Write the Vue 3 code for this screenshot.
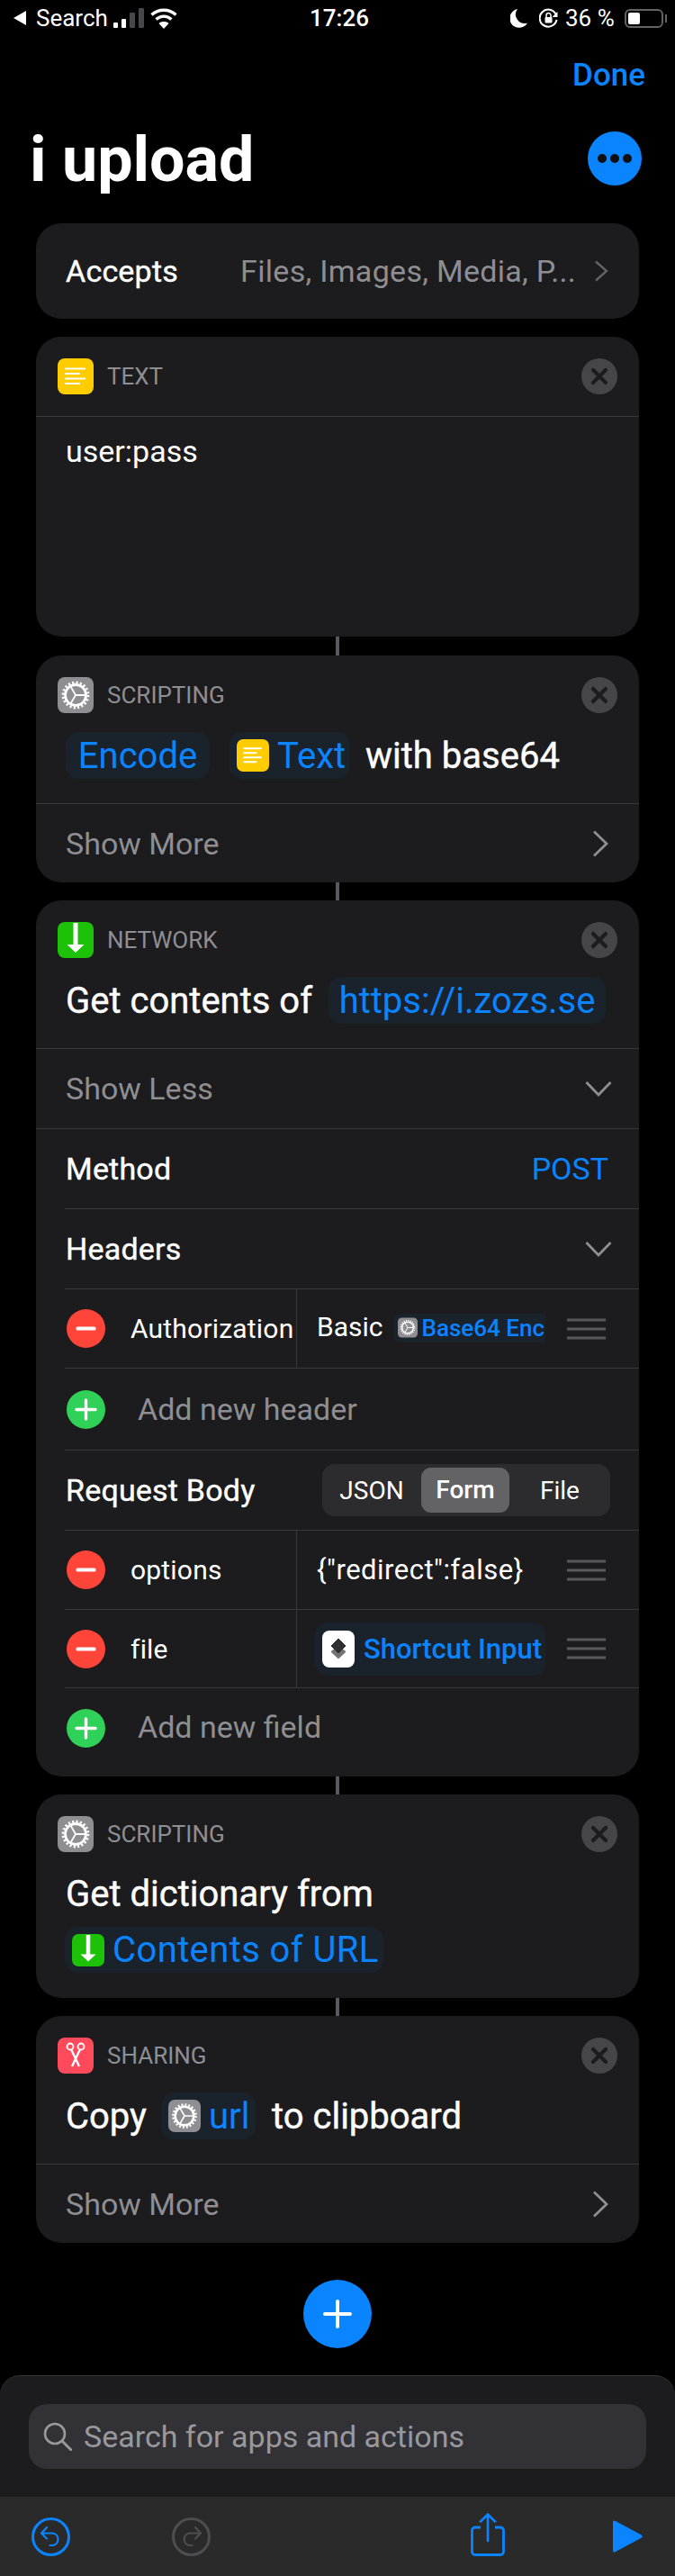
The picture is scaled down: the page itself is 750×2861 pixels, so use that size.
<template>
  <div class="page">
    <!-- shared icons -->
    <svg class="defs" width="0" height="0">
      <defs>
        <symbol id="i-text" viewBox="0 0 40 40">
          <rect width="40" height="40" rx="8" fill="#ffcc00" />
          <path d="M9 11.5h21M9 17h15M9 22.500h21M9 28h15" stroke="#fff" stroke-width="2.200" stroke-linecap="round" />
        </symbol>
        <symbol id="i-gear" viewBox="0 0 40 40">
          <rect width="40" height="40" rx="8" fill="#8e8e93" />
          <circle cx="20" cy="20" r="14" fill="none" stroke="#fff" stroke-width="2.800" stroke-dasharray="2.200 2.200" />
          <circle cx="20" cy="20" r="11.500" fill="none" stroke="#fff" stroke-width="2.800" />
          <path d="M20 20h11M20 20l-5.500-9.500M20 20l-5.500 9.500" stroke="#fff" stroke-width="1.800" />
        </symbol>
        <symbol id="i-down" viewBox="0 0 40 40">
          <rect width="40" height="40" rx="8" fill="#1cc108" />
          <path d="M17.500 1h5v24h7L20 34l-9.500-9h7z" fill="#fff" />
        </symbol>
        <symbol id="i-close" viewBox="0 0 40 40">
          <circle cx="20" cy="20" r="20" fill="#464649" />
          <path d="M13 13l14 14M27 13L13 27" stroke="#1c1c1e" stroke-width="4.200" stroke-linecap="round" />
        </symbol>
        <symbol id="i-minus" viewBox="0 0 43 43">
          <circle cx="21.500" cy="21.500" r="21.500" fill="#ff453a" />
          <rect x="10.500" y="19.500" width="22" height="4" rx="1.500" fill="#fff" />
        </symbol>
        <symbol id="i-plus" viewBox="0 0 43 43">
          <circle cx="21.500" cy="21.500" r="21.500" fill="#30d158" />
          <path d="M11 21.500h21M21.500 11v21" stroke="#fff" stroke-width="3.400" stroke-linecap="round" />
        </symbol>
        <symbol id="i-handle" viewBox="0 0 43 24">
          <path d="M0 2h43M0 12h43M0 22h43" stroke="#5a5a5e" stroke-width="3" />
        </symbol>
      </defs>
    </svg>

    <header class="status">
      <div class="status-left">
        <svg width="15" height="18" viewBox="0 0 15 18"><path d="M15 1v16L1 9z" fill="#fff" /></svg>
        <span>Search</span>
        <svg class="signal" width="34" height="24" viewBox="0 0 34 24">
          <rect x="0" y="17" width="5" height="6" rx="1" fill="#fff" />
          <rect x="9" y="13" width="5" height="10" rx="1" fill="#fff" />
          <rect x="18" y="6" width="6" height="17" rx="1" fill="#48484a" />
          <rect x="28" y="1" width="6" height="22" rx="1" fill="#48484a" />
        </svg>
        <svg class="wifi" width="30" height="24" viewBox="0 0 30 24">
          <path d="M1.500 8.500C9 1.500 21 1.500 28.500 8.500M6.500 13.500c5-4.500 12-4.500 17 0" fill="none" stroke="#fff" stroke-width="3.400" />
          <path d="M15 24l-5.500-6c3-2.600 8-2.600 11 0z" fill="#fff" />
        </svg>
      </div>
      <div class="status-time">17:26</div>
      <div class="status-right">
        <svg width="20" height="22" viewBox="0 0 20 22"><path d="M8 1a10.500 10.500 0 1 0 11 15.500A10 10 0 0 1 8 1z" fill="#fff" /></svg>
        <svg class="lock" width="21" height="22" viewBox="0 0 21 22">
          <path d="M18.500 6.500A9.500 9.500 0 1 0 19.500 13" fill="none" stroke="#fff" stroke-width="2" />
          <path d="M20.500 4v6h-6z" fill="#fff" />
          <rect x="6.500" y="10" width="8" height="6.500" rx="1" fill="#fff" />
          <path d="M8 10V8a2.500 2.500 0 0 1 5 0v2" fill="none" stroke="#fff" stroke-width="1.500" />
        </svg>
        <span class="percent">36 %</span>
        <div class="battery"><i></i></div>
      </div>
    </header>

    <div class="done-row"><span>Done</span></div>

    <div class="title-row">
      <h1>i upload</h1>
      <div class="more"><i></i><i></i><i></i></div>
    </div>

    <section class="card accepts">
      <span class="label">Accepts</span>
      <span class="accepts-value">Files, Images, Media, P...</span>
      <svg class="chev-small" width="16" height="24" viewBox="0 0 16 24"><path d="M2 1.500L14 12 2 22.500" fill="none" stroke="#636366" stroke-width="2.400" /></svg>
    </section>

    <div class="gap"></div>

    <section class="card">
      <div class="head head-line">
        <svg class="app-icon"><use href="#i-text" /></svg>
        <span>TEXT</span>
        <svg class="close"><use href="#i-close" /></svg>
      </div>
      <div class="text-body">user:pass</div>
    </section>

    <div class="link link-long"></div>

    <section class="card">
      <div class="head">
        <svg class="app-icon"><use href="#i-gear" /></svg>
        <span>SCRIPTING</span>
        <svg class="close"><use href="#i-close" /></svg>
      </div>
      <div class="sentence">
        <span class="pill pill-encode">Encode</span>
        <span class="pill pill-text"><svg class="pill-icon"><use href="#i-text" /></svg>Text</span>
        <span>with base64</span>
      </div>
      <div class="row row-full row-last">
        <span class="muted">Show More</span>
        <svg class="chev" width="18" height="30" viewBox="0 0 18 30"><path d="M2 1.500L16 15 2 28.500" fill="none" stroke="#8e8e93" stroke-width="2.800" /></svg>
      </div>
    </section>

    <div class="link"></div>

    <section class="card">
      <div class="head">
        <svg class="app-icon"><use href="#i-down" /></svg>
        <span>NETWORK</span>
        <svg class="close"><use href="#i-close" /></svg>
      </div>
      <div class="sentence sentence-get">
        <span>Get contents of</span>
        <span class="pill pill-url">https://i.zozs.se</span>
      </div>
      <div class="row row-full">
        <span class="muted">Show Less</span>
        <svg class="chev-down" width="30" height="18" viewBox="0 0 30 18"><path d="M1.500 2L15 16 28.500 2" fill="none" stroke="#8e8e93" stroke-width="2.800" /></svg>
      </div>
      <div class="row row-full">
        <span class="label">Method</span>
        <span class="post">POST</span>
      </div>
      <div class="row row-inset">
        <span class="label">Headers</span>
        <svg class="chev-down" width="30" height="18" viewBox="0 0 30 18"><path d="M1.500 2L15 16 28.500 2" fill="none" stroke="#8e8e93" stroke-width="2.800" /></svg>
      </div>
      <div class="kv">
        <div class="kv-key">
          <svg class="round"><use href="#i-minus" /></svg>
          <span class="key-name">Authorization</span>
        </div>
        <div class="kv-value">
          <span class="basic">Basic</span>
          <span class="pill-small"><svg><use href="#i-gear" /></svg>Base64 Enc</span>
          <svg class="handle"><use href="#i-handle" /></svg>
        </div>
      </div>
      <div class="add">
        <svg class="round"><use href="#i-plus" /></svg>
        <span class="muted">Add new header</span>
      </div>
      <div class="request">
        <span class="label">Request Body</span>
        <div class="segment">
          <span class="seg-json">JSON</span>
          <span class="seg-form">Form</span>
          <span class="seg-file">File</span>
        </div>
      </div>
      <div class="kv">
        <div class="kv-key">
          <svg class="round"><use href="#i-minus" /></svg>
          <span class="key-name">options</span>
        </div>
        <div class="kv-value">
          <span class="json-value">{"redirect":false}</span>
          <svg class="handle"><use href="#i-handle" /></svg>
        </div>
      </div>
      <div class="kv kv-short">
        <div class="kv-key">
          <svg class="round"><use href="#i-minus" /></svg>
          <span class="key-name">file</span>
        </div>
        <div class="kv-value kv-value-pill">
          <span class="pill-input">
            <svg viewBox="0 0 36 41">
              <rect width="36" height="41" rx="8" fill="#fff" />
              <path d="M18 31l-8-7.500 3.500-3 4.500 4 4.500-4 3.500 3z" fill="#737373" stroke="#737373" stroke-linejoin="round" />
              <path d="M18 9l8 8-8 8-8-8z" fill="#2f2f31" stroke="#2f2f31" stroke-linejoin="round" />
            </svg>
            Shortcut Input
          </span>
          <svg class="handle"><use href="#i-handle" /></svg>
        </div>
      </div>
      <div class="add add-last">
        <svg class="round"><use href="#i-plus" /></svg>
        <span class="muted">Add new field</span>
      </div>
    </section>

    <div class="link"></div>

    <section class="card">
      <div class="head">
        <svg class="app-icon"><use href="#i-gear" /></svg>
        <span>SCRIPTING</span>
        <svg class="close"><use href="#i-close" /></svg>
      </div>
      <div class="dict">
        <div class="dict-line">Get dictionary from</div>
        <span class="pill pill-contents"><svg class="pill-icon"><use href="#i-down" /></svg>Contents of URL</span>
      </div>
    </section>

    <div class="link"></div>

    <section class="card">
      <div class="head">
        <svg class="app-icon" viewBox="0 0 40 40">
          <rect width="40" height="40" rx="8" fill="#ff4a5c" />
          <circle cx="14" cy="10" r="3.500" fill="none" stroke="#fff" stroke-width="1.800" />
          <circle cx="26" cy="10" r="3.500" fill="none" stroke="#fff" stroke-width="1.800" />
          <path d="M15 13l9 19M25 13l-9 19" stroke="#fff" stroke-width="2.400" />
        </svg>
        <span>SHARING</span>
        <svg class="close"><use href="#i-close" /></svg>
      </div>
      <div class="sentence sentence-copy">
        <span>Copy</span>
        <span class="pill pill-var"><svg class="pill-icon"><use href="#i-gear" /></svg>url</span>
        <span>to clipboard</span>
      </div>
      <div class="row row-full row-last">
        <span class="muted">Show More</span>
        <svg class="chev" width="18" height="30" viewBox="0 0 18 30"><path d="M2 1.500L16 15 2 28.500" fill="none" stroke="#8e8e93" stroke-width="2.800" /></svg>
      </div>
    </section>

    <div class="add-action">
      <svg width="32" height="32" viewBox="0 0 32 32"><path d="M2 16h28M16 2v28" stroke="#fff" stroke-width="4" stroke-linecap="round" /></svg>
    </div>

    <section class="sheet">
      <div class="search">
        <svg width="32" height="32" viewBox="0 0 32 32">
          <circle cx="13" cy="13" r="11" fill="none" stroke="#98989d" stroke-width="2.600" />
          <path d="M21 21l10 10" stroke="#98989d" stroke-width="3" stroke-linecap="round" />
        </svg>
        <span>Search for apps and actions</span>
      </div>
    </section>

    <footer class="toolbar">
      <svg class="tool-undo" width="43" height="43" viewBox="0 0 43 43">
        <circle cx="21.500" cy="21.500" r="20" fill="none" stroke="#0a84ff" stroke-width="3" />
        <path d="M17 11l-6 6.500 6 6M11 17.500h12.500a6.800 6.800 0 0 1 0 13.500h-3" fill="none" stroke="#0a84ff" stroke-width="2.200" stroke-linecap="round" stroke-linejoin="round" />
      </svg>
      <svg class="tool-redo" width="43" height="43" viewBox="0 0 43 43">
        <circle cx="21.500" cy="21.500" r="20" fill="none" stroke="#4e4e50" stroke-width="3" />
        <path d="M26 11l6 6.500-6 6M32 17.500H19.500a6.800 6.800 0 0 0 0 13.500h3" fill="none" stroke="#4e4e50" stroke-width="2.200" stroke-linecap="round" stroke-linejoin="round" />
      </svg>
      <svg class="tool-share" width="38" height="48" viewBox="0 0 38 48">
        <path d="M11 16H5a3.500 3.500 0 0 0-3.500 3.500v23A3.500 3.500 0 0 0 5 46.500h28a3.500 3.500 0 0 0 3.500-3.500V19.500A3.500 3.500 0 0 0 33 16h-6" fill="none" stroke="#0a84ff" stroke-width="2.800" />
        <path d="M19 31V2M11 9.500L19 1.500l8 8" fill="none" stroke="#0a84ff" stroke-width="2.600" stroke-linecap="round" />
      </svg>
      <svg class="tool-play" width="33" height="36" viewBox="0 0 33 36">
        <path d="M2 0.500L32 16.500a1.800 1.800 0 0 1 0 3L2 35.500a1.500 1.500 0 0 1-2-1.500V2a1.500 1.500 0 0 1 2-1.500z" fill="#0a84ff" />
      </svg>
    </footer>
  </div>
</template>

<script setup>
</script>

<style>
body {
  background: #000;
}
</style>

<style scoped>
.page {
  width: 750px;
  height: 2861px;
  background: #000;
  color: #fff;
  font-family: Roboto, "Liberation Sans", sans-serif;
  overflow: hidden;
}

.defs {
  position: absolute;
}

/* status bar */
.status {
  height: 40px;
  display: flex;
  align-items: center;
  padding: 0 13px 0 14px;
  font-size: 26px;
  position: relative;
}

.status-left {
  display: flex;
  align-items: center;
}

.status-left span {
  margin-left: 11px;
  width: 78px;
}

.signal {
  margin-left: 8px;
}

.wifi {
  margin-left: 7px;
}

.status-time {
  position: absolute;
  left: 344px;
  font-weight: 500;
}

.status-right {
  margin-left: auto;
  display: flex;
  align-items: center;
}

.lock {
  margin-left: 12px;
}

.percent {
  margin-left: 8px;
  width: 66px;
}

.battery {
  width: 43px;
  height: 21px;
  border: 2px solid #636366;
  border-radius: 6px;
  padding: 2px;
  box-sizing: border-box;
  position: relative;
}

.battery::after {
  content: "";
  position: absolute;
  right: -6px;
  top: 4px;
  width: 2px;
  height: 9px;
  background: #636366;
}

.battery i {
  display: block;
  width: 13px;
  height: 100%;
  background: #fff;
  border-radius: 2px;
}

/* nav */
.done-row {
  height: 96px;
  padding: 24px 33px 0 0;
  box-sizing: border-box;
  display: flex;
  justify-content: flex-end;
  font-size: 35px;
  font-weight: 500;
  line-height: 40px;
  color: #0a84ff;
}

.title-row {
  height: 112px;
  padding: 0 37px 32px 33px;
  box-sizing: border-box;
  display: flex;
  align-items: center;
  justify-content: space-between;
}

h1 {
  margin: 2px 0 0;
  font-size: 70px;
  font-weight: 700;
  line-height: 80px;
}

.more {
  width: 60px;
  height: 60px;
  border-radius: 50%;
  background: #0a84ff;
  display: flex;
  align-items: center;
  justify-content: center;
  gap: 4px;
  margin-top: -1px;
}

.more i {
  width: 10px;
  height: 10px;
  border-radius: 50%;
  background: #101010;
}

/* cards */
.card {
  width: 670px;
  margin: 0 auto;
  background: #1c1c1e;
  border-radius: 28px;
  overflow: hidden;
}

.gap {
  height: 20px;
}

.link {
  width: 4px;
  height: 20px;
  margin: 0 auto;
  background: #5a5a5e;
}

.link-long {
  height: 21px;
}

.accepts {
  height: 106px;
  display: flex;
  align-items: center;
  padding: 0 34px 0 33px;
  box-sizing: border-box;
}

.label {
  font-size: 34px;
  letter-spacing: 0.2px;
  -webkit-text-stroke: 0.4px #fff;
}

.accepts-value {
  margin-left: auto;
  font-size: 34px;
  letter-spacing: 0.3px;
  color: #8e8e93;
  margin-right: 20px;
}

.head {
  height: 84px;
  padding: 24px 24px 0;
  box-sizing: border-box;
  display: flex;
  align-items: flex-start;
  font-size: 26px;
  line-height: 40px;
  color: #8e8e93;
}

.head-line {
  height: 89px;
  border-bottom: 1px solid #38383a;
}

.app-icon {
  width: 40px;
  height: 40px;
  margin-right: 15px;
  flex: none;
}

.close {
  width: 40px;
  height: 40px;
  margin-left: auto;
}

.text-body {
  height: 244px;
  padding: 18px 33px;
  box-sizing: border-box;
  font-size: 34px;
  line-height: 40px;
}

.sentence {
  height: 80px;
  padding: 1px 0 27px 33px;
  box-sizing: border-box;
  display: flex;
  align-items: center;
  font-size: 40px;
  -webkit-text-stroke: 0.4px #fff;
}

.sentence-get {
  gap: 18px;
}

.sentence-copy {
  gap: 16px;
}

.sentence-copy .pill {
  margin-right: 2px;
}

.pill {
  display: inline-flex;
  align-items: center;
  background: #1a222c;
  color: #0a84ff;
  border-radius: 14px;
  height: 52px;
  box-sizing: border-box;
  font-weight: 400;
  padding: 0 8px;
  white-space: nowrap;
  -webkit-text-stroke: 0;
}

.pill-encode {
  width: 160px;
  justify-content: center;
}

.pill-text {
  width: 134px;
  margin-left: 22px;
  margin-right: 17px;
}

.pill-url {
  width: 308px;
  justify-content: center;
}

.pill-icon {
  width: 36px;
  height: 36px;
  margin-right: 9px;
  flex: none;
}

.pill-var {
  width: 105px;
}

.row {
  height: 89px;
  display: flex;
  align-items: center;
  justify-content: space-between;
  padding-right: 34px;
  box-sizing: border-box;
}

.row-full {
  border-top: 1px solid #38383a;
  padding-left: 33px;
}

.row-last {
  height: 88px;
}

.row-inset {
  margin-left: 32px;
  padding-left: 1px;
  border-top: 1px solid #38383a;
}

.row .chev-down {
  margin-right: -4px;
}

.muted {
  font-size: 34px;
  color: #8e8e93;
}

.post {
  font-size: 34px;
  color: #0a84ff;
}

.kv {
  margin-left: 32px;
  height: 88px;
  display: flex;
  border-top: 1px solid #38383a;
  box-sizing: border-box;
}

.kv-short {
  height: 87px;
}

.kv-key {
  width: 258px;
  flex: none;
  display: flex;
  align-items: center;
  border-right: 1px solid #38383a;
  box-sizing: border-box;
  padding-left: 2px;
}

.round {
  width: 43px;
  height: 43px;
  flex: none;
}

.key-name {
  margin-left: 28px;
  font-size: 30px;
  letter-spacing: 0.2px;
  white-space: nowrap;
}

.kv-value {
  flex: 1;
  display: flex;
  align-items: center;
  padding: 0 37px 0 22px;
  font-size: 30px;
}

.kv-value-pill {
  padding-left: 20px;
}

.handle {
  width: 43px;
  height: 24px;
  margin-left: auto;
  flex: none;
}

.basic {
  margin-right: 12px;
  margin-top: -4px;
}

.pill-small {
  display: inline-flex;
  align-items: center;
  width: 168px;
  height: 32px;
  background: #1a222c;
  border-radius: 6px 0 0 6px;
  overflow: hidden;
  white-space: nowrap;
  color: #0a84ff;
  font-size: 26px;
  font-weight: 500;
  padding-left: 4px;
  box-sizing: border-box;
  margin-top: -2px;
}

.pill-small svg {
  width: 22px;
  height: 25px;
  margin-right: 5px;
  flex: none;
}

.json-value {
  white-space: nowrap;
  font-size: 31px;
  letter-spacing: 0.5px;
}

.pill-input {
  display: inline-flex;
  align-items: center;
  width: 256px;
  height: 59px;
  background: #1a222c;
  border-radius: 14px;
  color: #0a84ff;
  font-size: 31px;
  font-weight: 500;
  padding-left: 8px;
  box-sizing: border-box;
  white-space: nowrap;
}

.pill-input svg {
  width: 36px;
  height: 41px;
  margin-right: 10px;
  flex: none;
}

.add {
  margin-left: 32px;
  height: 91px;
  display: flex;
  align-items: center;
  border-top: 1px solid #38383a;
  padding-left: 2px;
  box-sizing: border-box;
}

.add .muted {
  margin-left: 36px;
}

.add-last {
  height: 99px;
  align-items: flex-start;
  padding-top: 23px;
}

.request {
  margin-left: 32px;
  height: 89px;
  display: flex;
  align-items: center;
  justify-content: space-between;
  padding: 0 32px 0 1px;
  border-top: 1px solid #38383a;
  box-sizing: border-box;
}

.segment {
  width: 320px;
  height: 58px;
  background: #2c2c2e;
  border-radius: 14px;
  display: flex;
  align-items: center;
  font-size: 28px;
}

.segment span {
  display: block;
  text-align: center;
}

.seg-json {
  width: 110px;
}

.seg-form {
  width: 98px;
  height: 50px;
  line-height: 50px;
  background: #636366;
  border-radius: 11px;
  font-weight: 500;
}

.seg-file {
  flex: 1;
}

.dict {
  padding: 0 32px;
  height: 142px;
  font-size: 40px;
}

.dict-line {
  height: 63px;
  line-height: 54px;
  padding-left: 1px;
  -webkit-text-stroke: 0.4px #fff;
}

.pill-contents {
  height: 51px;
  width: 354px;
  letter-spacing: 0.4px;
}

.add-action {
  width: 76px;
  height: 76px;
  border-radius: 50%;
  background: #0a84ff;
  margin: 41px auto 30px;
  display: flex;
  align-items: center;
  justify-content: center;
}

.sheet {
  height: 135px;
  background: #1c1c1e;
  border-top: 1px solid #38383a;
  border-radius: 22px 22px 0 0;
  padding: 31px 32px 0;
  box-sizing: border-box;
}

.search {
  height: 72px;
  background: #323236;
  border-radius: 20px;
  display: flex;
  align-items: center;
  padding-left: 16px;
  font-size: 34px;
  color: #98989d;
}

.search span {
  margin-left: 13px;
}

.toolbar {
  height: 88px;
  background: #2a2a2a;
  display: flex;
  align-items: center;
  padding-left: 35px;
}

.tool-redo {
  margin-left: 113px;
}

.tool-share {
  margin-left: 289px;
  margin-top: -4px;
}

.tool-play {
  margin-left: auto;
  margin-right: 36px;
}
</style>
